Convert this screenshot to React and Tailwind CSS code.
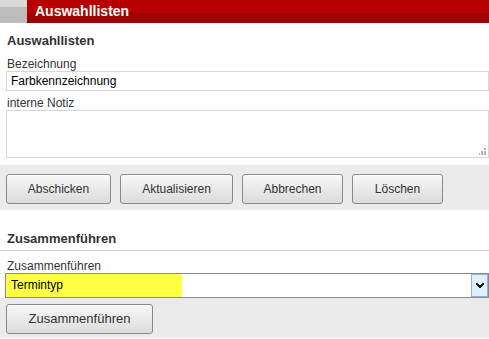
export default function App() {
  const font = { fontFamily: '"Liberation Sans", Arial, sans-serif' };
  const btn =
    "h-[30px] rounded-[3px] border border-[#8a8a8a] bg-[linear-gradient(#f7f7f7,#dcdcdc)] text-[12px] text-[#333] shadow-[inset_0_1px_0_#fff]";
  return (
    <div className="w-[489px] h-[339px] bg-white overflow-hidden text-[#333]" style={font}>
      {/* header */}
      <div className="flex h-[23px]">
        <div className="w-[27px] bg-[linear-gradient(#d9d9d9_0px,#d9d9d9_7px,#bcbcbc_7px,#bcbcbc_23px)]" />
        <div className="flex-1 bg-[linear-gradient(#b70000_0px,#b70000_13px,#9f0000_13px,#9f0000_23px)] pl-[8px] text-white font-bold text-[14px] leading-[23px]">
          Auswahllisten
        </div>
      </div>

      {/* form */}
      <div className="pl-[6px]">
        <div className="pt-[9px] pl-[1px] font-bold text-[13px] leading-[18px]">Auswahllisten</div>
        <div className="mt-[7px] pl-[1px] text-[12px] leading-[14px]">Bezeichnung</div>
        <div className="h-[20px] border border-[#d7d7d7] pl-[4px] text-[12px] leading-[18px] text-black">
          Farbkennzeichnung
        </div>
        <div className="mt-[5px] pl-[1px] text-[12px] leading-[14px]">interne Notiz</div>
        <div className="relative h-[48px] border border-[#d7d7d7]">
          <svg className="absolute right-[2px] bottom-[2px]" width="7" height="7" viewBox="0 0 7 7">
            <rect x="5" y="0" width="2" height="2" fill="#b0b0b0" />
            <rect x="2" y="3" width="2" height="2" fill="#b0b0b0" />
            <rect x="5" y="3" width="2" height="2" fill="#b0b0b0" />
            <rect x="0" y="5" width="2" height="2" fill="#b0b0b0" transform="translate(-1 0)" />
            <rect x="2" y="5" width="2" height="2" fill="#b0b0b0" transform="translate(0 0)" />
            <rect x="5" y="5" width="2" height="2" fill="#b0b0b0" />
          </svg>
        </div>
      </div>

      {/* button band */}
      <div className="mt-[7px] h-[45px] bg-[#ebebeb] pl-[6px] pt-[9px] flex gap-[9px]">
        <button className={btn + " w-[105px]"}>Abschicken</button>
        <button className={btn + " w-[113px]"}>Aktualisieren</button>
        <button className={btn + " w-[101px]"}>Abbrechen</button>
        <button className={btn + " w-[91px]"}>Löschen</button>
      </div>

      {/* merge section */}
      <div className="pt-[20px] pb-[2px] pl-[7px] border-b border-[#d4d4d4] font-bold text-[13px] leading-[18px]">
        Zusammenführen
      </div>
      <div className="mt-[8px] pl-[7px] text-[12px] leading-[14px]">Zusammenführen</div>
      <div className="ml-[5px] h-[25px] border border-[#8a8a8a] bg-white flex">
        <div className="w-[176px] bg-[#ffff44] pl-[5px] text-[12px] leading-[23px] text-black">Termintyp</div>
        <div className="flex-1" />
        <div className="w-[17px] h-[23px] border border-[#8db2e3] bg-[#e1eefc] flex items-center justify-center">
          <svg width="8" height="6" viewBox="0 0 8 6">
            <path d="M0 0h2v1h1v1h2v-1h1v-1h2v2h-1v1h-1v1h-1v1h-2v-1h-1v-1h-1v-1h-1z" fill="#111" />
          </svg>
        </div>
      </div>
      <div className="h-[40px] bg-[#ebebeb] pl-[6px] pt-[6px]">
        <button className={btn + " w-[147px] h-[29px] text-[13px]"}>Zusammenführen</button>
      </div>
    </div>
  );
}
